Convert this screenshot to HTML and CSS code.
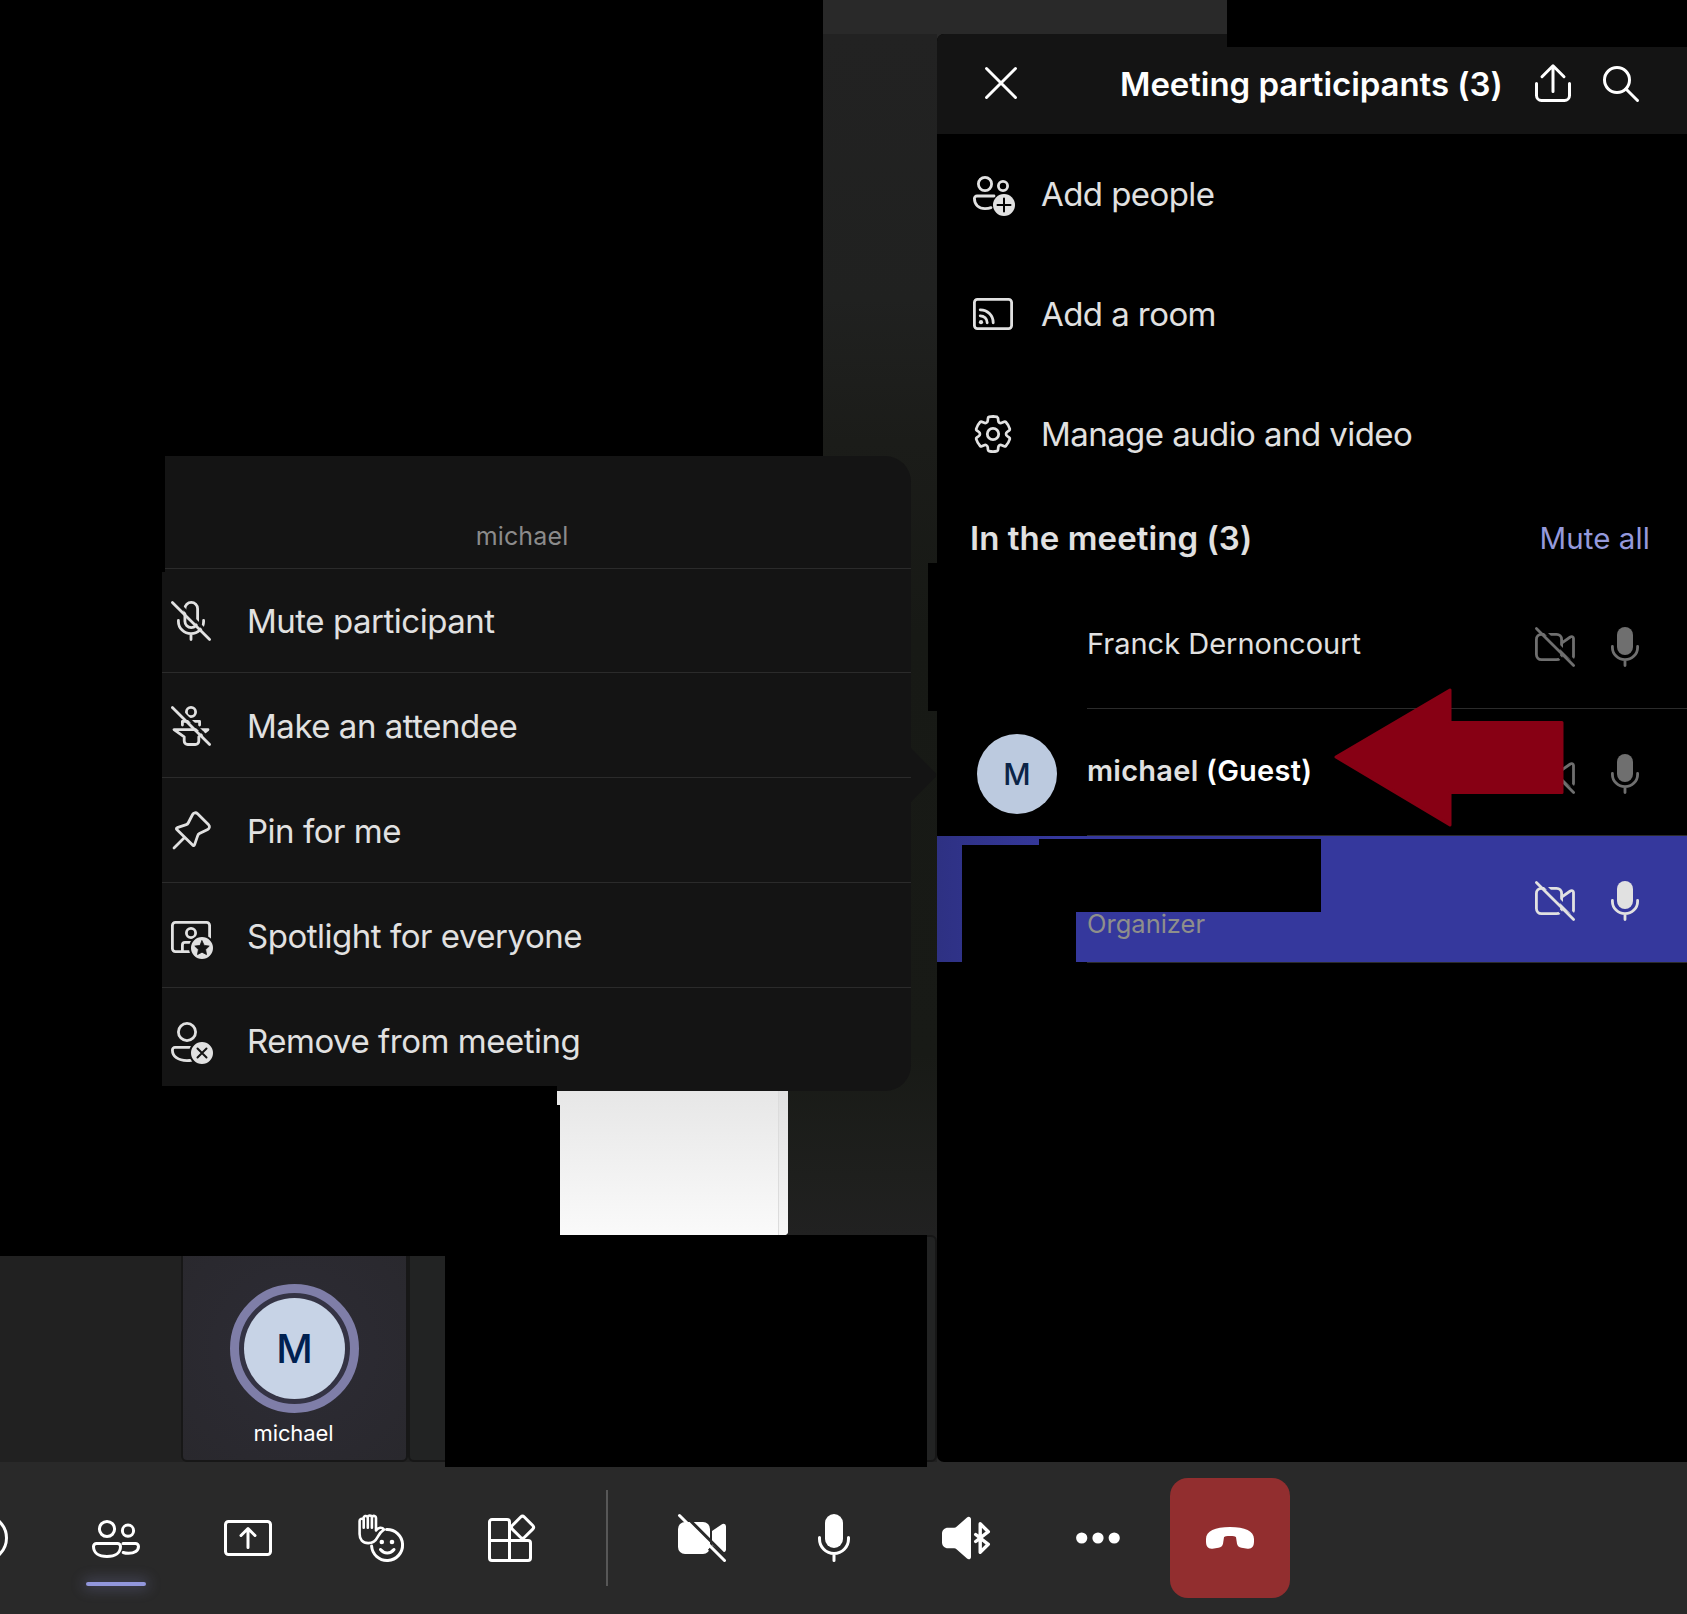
FILE: index.html
```html
<!DOCTYPE html>
<html lang="en">
<head>
<meta charset="utf-8">
<title>Meeting participants</title>
<link rel="stylesheet" href="styles.css">
</head>
<body>
<svg class="defs" width="0" height="0" aria-hidden="true">
  <symbol id="video-off" viewBox="0 0 40 40">
    <rect x="1.4" y="7.4" width="25.2" height="25.2" rx="5"/>
    <path d="M27 15.8l8.3-5.8a2 2 0 0 1 3.2 1.6v17.8a2 2 0 0 1-3.2 1.6L27 25"/>
    <path class="cut" d="M4-1l37.500 37.500"/>
    <path class="cut" d="M24 29.500l11 11"/>
    <path d="M1.400 1.400l37.200 37.200"/>
  </symbol>
  <symbol id="mic" viewBox="0 0 40 40">
    <rect class="solid" x="12" y="0" width="16" height="28" rx="8"/>
    <path d="M7.400 19.400v1a12.600 12.200 0 0 0 25.200 0v-1M20 33v5.600"/>
  </symbol>
</svg>

<div class="app">
  <div class="titlebar"></div>
  <main class="content">
    <section class="stage">
      <div class="shared"><div class="slide"><div class="slide-edge"></div></div></div>
      <div class="filmstrip">
        <div class="tile tile-user">
          <div class="ring"><div class="face">M</div></div>
          <div class="tile-name">michael</div>
        </div>
        <div class="tile tile-wide"></div>
      </div>
    </section>

    <aside class="panel">
      <header class="panel-head">
        <svg class="close" viewBox="0 0 32 32"><path d="M1.500 1.500l29 29M30.500 1.500l-29 29"/></svg>
        <h1>Meeting participants (3)</h1>
        <svg class="share" viewBox="0 0 36 38"><path d="M1.500 19.500v12a5 5 0 0 0 5 5h23a5 5 0 0 0 5-5v-12M18 27.500V1.800M7 12.700L18 1.800l11 10.900"/></svg>
        <svg class="search" viewBox="0 0 36 36"><circle cx="14" cy="14" r="12.500"/><path d="M23 23l11.500 11.500"/></svg>
      </header>

      <ul class="actions">
        <li>
          <svg class="icon" viewBox="0 0 40 40">
            <circle cx="12" cy="10" r="6.600"/><circle cx="30" cy="12" r="4.600"/>
            <path d="M21 22H4a2.600 2.600 0 0 0-2.600 2.600C1.400 31 6 34.600 12 34.600c2.300 0 4.300-.3 6-1"/>
            <circle class="solid" cx="31" cy="31" r="11"/><path class="glyph" d="M31 24.500v13M24.500 31h13"/>
          </svg>Add people</li>
        <li>
          <svg class="icon" viewBox="0 0 40 40">
            <rect x="1.400" y="5.400" width="37.200" height="29.200" rx="3"/>
            <path d="M7.200 15.800a12.800 12.800 0 0 1 13 13M7.200 21.800a7 7 0 0 1 7 7"/><circle class="solid" cx="8" cy="28.200" r="2.100"/>
          </svg>Add a room</li>
        <li>
          <svg class="icon" viewBox="0 0 40 40">
            <circle cx="20" cy="20" r="5.700"/>
            <path class="gear" transform="translate(-1.600 -1.600) scale(1.800)" d="M12.012 2.250c.734.008 1.465.093 2.182.253.313.7.547.33.582.649l.17 1.527c.077.7.669 1.232 1.375 1.233.19 0 .377-.04.552-.117l1.401-.615c.291-.128.632-.059.849.174a9.800 9.800 0 0 1 2.205 3.792c.094.305-.014.636-.271.826l-1.242.915a1.380 1.380 0 0 0 0 2.226l1.243.915c.257.190.366.521.271.826a9.800 9.800 0 0 1-2.204 3.792c-.217.232-.557.302-.848.174l-1.407-.616a1.380 1.380 0 0 0-1.926 1.114l-.169 1.526a.75.750 0 0 1-.572.647 9.500 9.500 0 0 1-4.406 0 .75.750 0 0 1-.572-.647l-.169-1.524a1.380 1.380 0 0 0-1.925-1.111l-1.406.616c-.292.128-.632.058-.849-.174a9.800 9.800 0 0 1-2.204-3.796c-.094-.305.015-.637.272-.826l1.243-.916a1.380 1.380 0 0 0 0-2.226l-1.243-.914a.75.750 0 0 1-.272-.827 9.800 9.800 0 0 1 2.205-3.792c.217-.232.558-.302.849-.174l1.400.615a1.390 1.390 0 0 0 1.931-1.118l.170-1.526a.75.750 0 0 1 .583-.649c.717-.160 1.449-.244 2.201-.253z"/>
          </svg>Manage audio and video</li>
      </ul>

      <div class="section-head"><h2>In the meeting (3)</h2><a class="mute-all">Mute all</a></div>

      <div class="person">
        <div class="avatar-slot"></div>
        <div class="person-body">
          <div class="names"><span class="name">Franck Dernoncourt</span></div>
          <svg class="icon"><use href="#video-off"/></svg><svg class="icon"><use href="#mic"/></svg>
        </div>
      </div>
      <div class="person">
        <div class="avatar-slot"><div class="avatar">M</div></div>
        <div class="person-body">
          <div class="names"><span class="name strong">michael <b>(Guest)</b></span></div>
          <svg class="icon"><use href="#video-off"/></svg><svg class="icon"><use href="#mic"/></svg>
        </div>
      </div>
      <div class="person active">
        <div class="avatar-slot"></div>
        <div class="person-body">
          <div class="names"><span class="role">Organizer</span></div>
          <svg class="icon"><use href="#video-off"/></svg><svg class="icon"><use href="#mic"/></svg>
        </div>
      </div>
    </aside>
  </main>

  <nav class="toolbar">
    <div class="tool"><svg viewBox="0 0 48 48"><circle cx="24" cy="24" r="22.500"/></svg></div>
    <div class="tool selected"><svg viewBox="0 0 48 48">
      <circle cx="15" cy="15" r="7.600"/><circle cx="36" cy="16.700" r="5.600"/>
      <path d="M4.500 29.500h21a3 3 0 0 1 3 3c0 6-5 10-13.500 10s-13.500-4-13.500-10a3 3 0 0 1 3-3zM31 29.500h12.500a3 3 0 0 1 3 3c0 4-4 6.800-10 6.800-2.100 0-3.900-.3-5.300-.8"/></svg></div>
    <div class="tool"><svg viewBox="0 0 48 48"><rect x="1.500" y="7.500" width="45" height="33" rx="3"/><path d="M24 33.500V15M17 21.500l7-7 7 7"/></svg></div>
    <div class="tool"><svg viewBox="0 0 48 48">
      <path d="M30.500 15.500A15.500 15.500 0 1 1 15.600 32M24.500 35.500c3.500 4.500 10 4.500 13.500 0"/>
      <circle class="solid" cx="25.800" cy="28" r="2.300"/><circle class="solid" cx="36" cy="28" r="2.300"/>
      <path class="hand" d="M3.600 20V7.200a2.300 2.300 0 0 1 4-1.700V4.300a2.200 2.200 0 0 1 4.100-1.200 2.200 2.200 0 0 1 4.200 0 2.200 2.200 0 0 1 4.100 1.400V16.500c2.300-3.200 6-3.700 8-.9-2.700 1.600-4.600 3.900-6.300 7.200-2 4-4.900 6.300-9.500 6.300-5.600 0-8.600-3.600-8.600-9.100zM7.700 5v8.800M11.800 3.500v10.300M15.900 3.500v10.300"/></svg></div>
    <div class="tool"><svg viewBox="0 0 48 48">
      <path d="M21.500 46.500V8a2.500 2.500 0 0 0-2.500-2.500H4A2.500 2.500 0 0 0 1.500 8v36A2.500 2.500 0 0 0 4 46.500h36a2.500 2.500 0 0 0 2.500-2.500V29a2.500 2.500 0 0 0-2.500-2.500H1.500"/>
      <rect x="26" y="4.800" width="17" height="17" rx="2.500" transform="rotate(45 34.500 13.300)"/></svg></div>
    <div class="divider"></div>
    <div class="tool"><svg viewBox="0 0 48 48">
      <rect class="solid" y="8" width="32" height="32" rx="7"/>
      <path class="solid" d="M34 17l9.600-6.600c2-1.300 4.400-.2 4.400 2.100v23c0 2.300-2.400 3.400-4.400 2.100L34 31z"/>
      <path class="cut" d="M3.700-2L50 44.300M31 34.600l12 12"/><path d="M1.500 1.500l45 45"/></svg></div>
    <div class="tool"><svg viewBox="0 0 48 48"><rect class="solid" x="15" width="18" height="34" rx="9"/><path d="M9.500 23.500V25a14.500 14.500 0 0 0 29 0v-1.500M24 40v6.500"/></svg></div>
    <div class="tool"><svg viewBox="0 0 48 48">
      <path class="solid" d="M6 13.700h6.200c1 0 1.600-.3 2.300-.9L25 3.400c1.700-1.400 4-.5 4 1.700v37.800c0 2.200-2.300 3.100-4 1.700l-10.500-9.400c-.7-.6-1.300-.9-2.300-.9H6c-3.500 0-6-2.500-6-6v-8.600c0-3.500 2.500-6 6-6z"/>
      <path class="bluetooth" d="M33.700 20.500l12.600 9.800-8.100 7.900V9.800l8.100 7.900-12.600 9.800"/></svg></div>
    <div class="tool"><svg viewBox="0 0 48 48"><g class="solid"><circle cx="7.700" cy="24" r="5.600"/><circle cx="24" cy="24" r="5.600"/><circle cx="40.200" cy="24" r="5.600"/></g></svg></div>
    <div class="tool hangup"><svg viewBox="0 0 48 48"><path class="solid" d="M24 13C9 13 0 17 0 25v2.500c0 4.500 2 7.700 6.500 7.200l6-1c2.500-.4 4-1.800 4.500-4l1-6.500c.1-.6 3-1.200 6-1.200s5.900.6 6 1.200l1 6.500c.5 2.200 2 3.600 4.500 4l6 1c4.500.5 6.500-2.700 6.500-7.200V25c0-8-9-12-24-12z"/></svg></div>
  </nav>

  <!-- hidden regions -->
  <div class="mask mask-stage"></div>
  <div class="mask mask-strip"></div>
  <div class="mask mask-top"></div>
  <div class="mask mask-avatar"></div>
  <div class="mask mask-name"></div>
  <div class="mask mask-photo"></div>

  <div class="popover">
    <div class="popover-title">michael</div>
    <div class="option"><svg class="icon" viewBox="0 0 40 40">
      <rect x="13.900" y="1.400" width="12.700" height="25.200" rx="6.350"/><path d="M7.400 19.400v1a12.600 12.200 0 0 0 25.200 0v-1M20 33v5.600"/>
      <path class="cut" d="M4-1l37 37"/><path d="M1.400 1.400l37.200 37.200"/></svg>Mute participant</div>
    <div class="option"><svg class="icon" viewBox="0 0 40 40">
      <circle cx="20" cy="6" r="4.600"/><path d="M11.400 19v-3.600h17.200V19M3 23.600h34l-9.200 7.200v4.200a3.500 3.500 0 0 1-3.500 3.500h-7.600a3.500 3.500 0 0 1-3.500-3.500v-4.200z"/>
      <path class="cut" d="M4-1l37 37"/><path d="M1.400 1.400l37.200 37.200"/></svg>Make an attendee</div>
    <div class="option"><svg class="icon" viewBox="0 0 40 40">
      <path d="M26.600 2.800l10.800 10.600c1.700 1.700 1.300 4-.7 5l-8.300 4.200c-.8.400-1.300 1-1.600 1.800l-3.200 9.200c-.3 1-1.300 1.300-2 .5L5.800 18.600c-.7-.7-.5-1.700.5-2l9-3c.9-.3 1.500-.8 1.900-1.600l4.400-8.500c1-2 3.300-2.400 5-.7zM13 27L3 37"/></svg>Pin for me</div>
    <div class="option"><svg class="icon" viewBox="0 0 40 40">
      <rect x="1.400" y="6.400" width="37.200" height="29.200" rx="3"/><circle cx="20" cy="17" r="4.600"/><path d="M11.400 35v-6a2.600 2.600 0 0 1 2.600-2.600h8"/>
      <circle class="solid halo" cx="31" cy="32" r="12"/><path class="star" d="M31 24.800l2.200 4.600 5 .7-3.600 3.500.9 5-4.500-2.400-4.500 2.400.9-5-3.600-3.500 5-.7z"/></svg>Spotlight for everyone</div>
    <div class="option"><svg class="icon" viewBox="0 0 40 40">
      <circle cx="16" cy="11" r="8.600"/><path d="M22 26.400H4A2.600 2.600 0 0 0 1.400 29c0 6.500 5.600 10.600 14.600 10.600 1.800 0 3.500-.2 5-.5"/>
      <circle class="solid halo" cx="31" cy="32" r="12"/><path class="glyph" d="M26.500 27.500l9 9M35.500 27.500l-9 9"/></svg>Remove from meeting</div>
    <svg class="tip" viewBox="0 0 26 54"><path d="M0 0l24 24.500q2.500 2.500 0 5L0 54z"/></svg>
  </div>
  <div class="mask mask-left"></div>
  <div class="mask mask-left-top"></div>
  <div class="mask mask-below"></div>

  <svg class="pointer" viewBox="0 0 230 140"><path d="M2 69L116 2v32.500h112v70H116V137z"/></svg>
</div>
</body>
</html>
```
FILE: styles.css
```css
* { box-sizing: border-box; }
body { margin: 0; background: #292929; font-family: Inter, "Liberation Sans", sans-serif; color: #e1e1e1; }
h1, h2, ul { margin: 0; padding: 0; font-size: inherit; list-style: none; }
.defs { position: absolute; }
svg { display: block; flex: none; overflow: visible; fill: none; stroke: currentColor; stroke-width: 3; stroke-linecap: round; stroke-linejoin: round; }
symbol { overflow: visible; }
.solid { fill: currentColor; stroke: none; }
.cut { stroke: var(--surface); stroke-linecap: butt; }
.icon { width: 40px; height: 40px; stroke-width: 2.8; }
.icon .glyph { stroke: var(--surface); stroke-width: 2; }
.icon .star { fill: var(--surface); stroke: var(--surface); stroke-width: .8; }
.icon .halo { stroke: var(--surface); stroke-width: 2; }
.icon .gear { stroke-width: 1.5; }

.app { --surface: #292929; position: relative; display: flex; flex-direction: column; width: 1687px; height: 1614px; overflow: hidden; background: #292929; }
.titlebar { height: 34px; }
.content { display: flex; height: 1428px; }

.stage { display: flex; flex-direction: column; width: 937px; background: #212121; }
.shared { display: flex; align-items: flex-end; height: 1201px; padding-left: 557px; background: linear-gradient(#222 0, #202120 22%, #1b1c19 34%, #171915 50%, #181a16 85%, #1e1f1d 95%, #212121); }
.slide { display: flex; justify-content: flex-end; width: 231px; height: 150px; border-bottom-right-radius: 4px; overflow: hidden; background: linear-gradient(#e6e6e6, #fafafa); }
.slide-edge { width: 10px; border-left: 1px solid #dcdcdc; background: linear-gradient(#e0e0e0, #f6f6f6); }
.filmstrip { display: flex; height: 227px; padding-left: 181px; }
.tile { border: 2px solid #171717; border-radius: 6px; background: #222323; }
.tile-user { display: flex; flex-direction: column; align-items: center; width: 227px; padding-top: 47px; background: radial-gradient(circle at 50% 50%, #2d2c35, #29282d); }
.tile-wide { width: 529px; }
.ring { display: flex; align-items: center; justify-content: center; width: 129px; height: 129px; border: 9px solid #7f7ea8; border-radius: 50%; background: #343344; }
.face { width: 101px; height: 101px; border-radius: 50%; background: #c7d3e6; color: #002050; font-size: 40px; font-weight: 500; line-height: 101px; text-align: center; }
.tile-name { margin-top: 6px; font-size: 22px; line-height: 28px; color: #fff; letter-spacing: -.1px; padding-right: 2px; }

.panel { --surface: #000; width: 750px; border-radius: 7px 0 0 7px; overflow: hidden; background: #000; }
.panel-head { display: flex; height: 100px; padding: 0 48px 0 48px; background: #141414; color: #fff; }
.close { width: 32px; height: 32px; margin-top: 33px; }
.panel-head h1 { width: 383px; margin: 28px 0 0 103px; font-size: 33px; font-weight: 600; line-height: 44px; white-space: nowrap; letter-spacing: -.06px; }
.share { width: 36px; height: 38px; margin: 30px 0 0 32px; }
.search { width: 36px; height: 36px; margin: 32px 0 0 32px; }
.actions li { display: flex; align-items: center; gap: 28px; height: 120px; padding-left: 36px; font-size: 33px; white-space: nowrap; letter-spacing: -.57px; }
.section-head { display: flex; justify-content: space-between; align-items: center; height: 88px; padding: 0 37px 0 33px; }
.section-head h2 { font-size: 33px; font-weight: 600; white-space: nowrap; letter-spacing: .06px; }
.mute-all { color: #9599dc; font-size: 29.500px; letter-spacing: .1px; }
.person { display: flex; height: 127px; --surface: #000; }
.avatar-slot { width: 150px; padding: 25px 0 0 40px; }
.avatar { width: 80px; height: 80px; border-radius: 50%; background: #bccadf; color: #0b2447; font-size: 30px; font-weight: 500; line-height: 80px; text-align: center; }
.person-body { display: flex; align-items: center; gap: 30px; width: 600px; padding: 3px 42px 0 0; border-bottom: 1px solid #2b2b2b; color: #6f6f6f; }
.names { flex: 1; color: #e1e1e1; font-size: 29px; white-space: nowrap; }
.name { display: block; padding-bottom: 7px; }
.strong { font-weight: 600; letter-spacing: .25px; }
.strong b { color: #fff; font-weight: 600; }
.role { display: block; padding-top: 45px; color: #8f8f8b; font-size: 25.500px; }
.active { --surface: #35389d; background: linear-gradient(90deg, #2e3183, #35389d 16%) 0 0 / 100% 126px no-repeat; }
.active .person-body { color: #e1e1e1; }

.toolbar { display: flex; gap: 12px; height: 152px; padding: 16px 0; margin-left: -76px; color: #fff; }
.tool { display: flex; flex: none; align-items: center; justify-content: center; width: 120px; height: 120px; position: relative; }
.tool svg { width: 48px; height: 48px; }
.tool .hand { stroke-width: 2.600; }
.tool .bluetooth { stroke-width: 3.400; }
.selected::after { content: ""; position: absolute; left: 30px; top: 104px; width: 60px; height: 4px; border-radius: 2px; background: #9297dc; box-shadow: 0 0 14px 3px rgba(146,151,220,.28); }
.divider { width: 2px; height: 96px; margin: 12px 22px 0 22px; background: #575757; }
.hangup { border-radius: 18px; background: #922e2f; }

.mask { position: absolute; background: #000; }
.mask-stage { left: 0; top: 0; width: 823px; height: 1085px; }
.mask-strip { left: 445px; top: 1235px; width: 482px; height: 232px; }
.mask-top { left: 1227px; top: 0; width: 460px; height: 47px; }
.mask-avatar { left: 928px; top: 563px; width: 138px; height: 148px; }
.mask-name { left: 1039px; top: 839px; width: 282px; height: 73px; }
.mask-photo { left: 962px; top: 845px; width: 114px; height: 117px; }
.mask-left { left: 0; top: 456px; width: 162px; height: 800px; }
.mask-left-top { left: 162px; top: 456px; width: 3px; height: 116px; }
.mask-below { left: 0; top: 1086px; width: 560px; height: 170px; clip-path: polygon(0 0, 557px 0, 557px 19px, 560px 19px, 560px 170px, 0 170px); }

.popover { --surface: #141414; position: absolute; left: 133px; top: 456px; width: 778px; height: 635px; border-radius: 26px; background: #141414; }
.popover-title { height: 113px; padding-top: 64px; border-bottom: 1px solid #2b2b2b; color: #8b8b8b; font-size: 25px; line-height: 32px; text-align: center; letter-spacing: .15px; }
.option { display: flex; align-items: center; gap: 36px; height: 105px; padding: 2px 0 0 38px; border-bottom: 1px solid #2b2b2b; font-size: 33px; white-space: nowrap; letter-spacing: -.48px; }
.option:nth-child(2) { height: 104px; padding-top: 1px; }
.option:nth-child(6) { height: 103px; border: 0; }
.tip { position: absolute; left: 778px; top: 292px; width: 26px; height: 54px; fill: #141414; stroke: none; }
.pointer { position: absolute; left: 1334px; top: 688px; width: 230px; height: 140px; color: #870014; fill: #870014; }
```
